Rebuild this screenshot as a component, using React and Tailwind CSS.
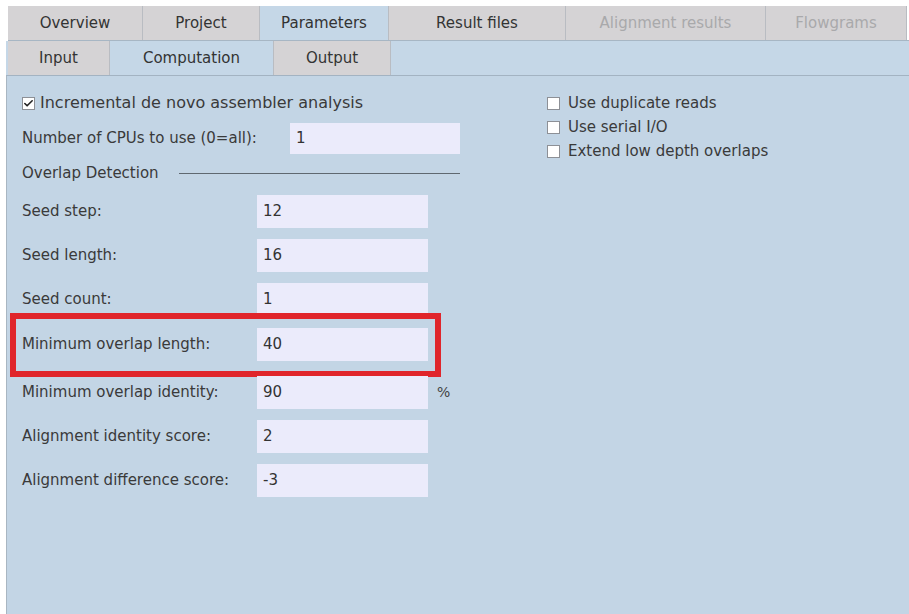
import { Check } from 'lucide-react';

const font = { fontFamily: '"DejaVu Sans", "Noto Sans", sans-serif' };

const topTabs = [
  { label: 'Overview', w: 'w-[135px]' },
  { label: 'Project', w: 'w-[117px]' },
  { label: 'Parameters', w: 'w-[129px]', active: true },
  { label: 'Result files', w: 'w-[177px]' },
  { label: 'Alignment results', w: 'w-[200px]', disabled: true },
  { label: 'Flowgrams', w: 'w-[141px]', disabled: true },
];

const subTabs = [
  { label: 'Input', w: 'w-[102px]' },
  { label: 'Computation', w: 'w-[164px]', active: true },
  { label: 'Output', w: 'w-[117px]' },
];

const Tab = ({ label, w, active, disabled }) => (
  <div
    className={`${w} flex h-full items-center justify-center border-r border-[#b9bcc2] text-[15px] ${
      active ? 'bg-[#c5d7e7]' : 'bg-[#d5d3d5]'
    } ${disabled ? 'text-[#a9a9ab]' : 'text-[#333]'}`}
  >
    {label}
  </div>
);

const Box = ({ checked }) => (
  <div className="flex h-[13px] w-[13px] shrink-0 items-center justify-center border border-[#8d9096] bg-white">
    {checked && <Check size={11} strokeWidth={3.5} className="text-[#222]" />}
  </div>
);

const Field = ({ value, className = '' }) => (
  <div className={`flex h-[33px] w-[171px] shrink-0 items-center bg-[#ebebfb] pl-[6px] text-[15px] text-[#333] ${className}`}>
    {value}
  </div>
);

const Row = ({ label, value, unit, className = '', children }) => (
  <div className={`relative flex h-[33px] items-center ${className}`}>
    <div className="w-[235px] shrink-0 text-[15px] text-[#3a3a3a]">{label}</div>
    <Field value={value} />
    {unit && <div className="ml-[9px] text-[14px] text-[#444]">{unit}</div>}
    {children}
  </div>
);

export default function App() {
  return (
    <div style={font} className="h-[614px] w-[909px] overflow-hidden bg-white">
      <div className="h-[6px]" />
      <div className="ml-[8px] flex h-[35px] border-b border-[#a7b6c4]">
        {topTabs.map((t) => (
          <Tab key={t.label} {...t} />
        ))}
      </div>
      <div className="ml-[6px] flex h-[35px] border-b border-[#a3b3c2] bg-[#c5d7e7] pl-[2px]">
        {subTabs.map((t) => (
          <Tab key={t.label} {...t} />
        ))}
        <div className="flex-1" />
      </div>
      <div className="ml-[6px] flex h-[538px] border-l border-[#a9b6c2] bg-[#c3d5e5] pl-[15px] pt-[17px]">
        <div className="w-[438px]">
          <div className="flex h-[20px] items-center gap-[5px] text-[16px] text-[#3a3a3a]">
            <Box checked />
            Incremental de novo assembler analysis
          </div>
          <div className="mt-[10px] flex h-[31px] items-center">
            <div className="w-[268px] text-[15px] text-[#3a3a3a]">Number of CPUs to use (0=all):</div>
            <Field value="1" className="!h-[31px] !w-[170px]" />
          </div>
          <div className="mt-[9px] flex h-[20px] items-center gap-[20px] text-[15px] text-[#3a3a3a]">
            Overlap Detection
            <div className="h-px flex-1 bg-[#5f6870]" />
          </div>
          <Row label="Seed step:" value="12" className="mt-[12px]" />
          <Row label="Seed length:" value="16" className="mt-[11px]" />
          <Row label="Seed count:" value="1" className="mt-[11px]" />
          <Row label="Minimum overlap length:" value="40" className="mt-[12px] w-[406px]">
            {/* highlight frame around this row */}
            <div className="pointer-events-none absolute -top-[15px] -bottom-[16px] -left-[12px] -right-[13px] border-[6px] border-[#e0252b]" />
          </Row>
          <Row label="Minimum overlap identity:" value="90" unit="%" className="mt-[15px]" />
          <Row label="Alignment identity score:" value="2" className="mt-[11px]" />
          <Row label="Alignment difference score:" value="-3" className="mt-[11px]" />
        </div>
        <div className="ml-[87px] flex flex-col gap-[4px]">
          {['Use duplicate reads', 'Use serial I/O', 'Extend low depth overlaps'].map((l) => (
            <div key={l} className="flex h-[20px] items-center gap-[8px] text-[15px] text-[#3a3a3a]">
              <Box />
              {l}
            </div>
          ))}
        </div>
      </div>
    </div>
  );
}
